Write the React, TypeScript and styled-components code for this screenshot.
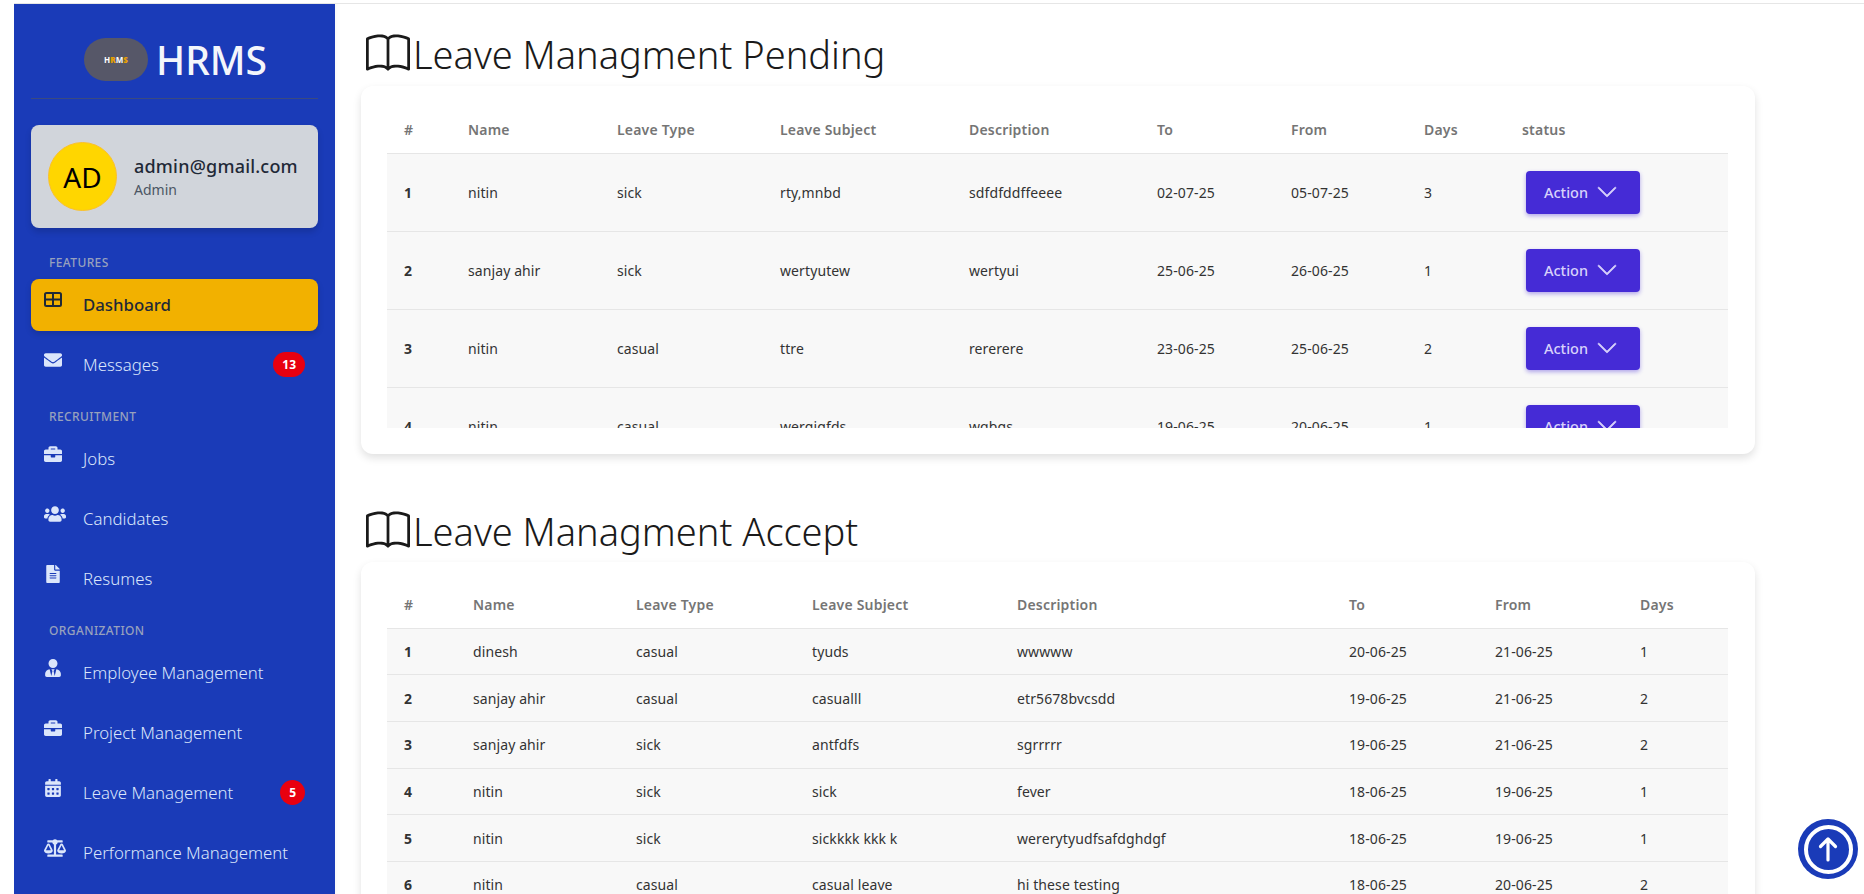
import styled, { createGlobalStyle } from "styled-components";
import { BsBook, BsChevronDown } from "react-icons/bs";
import {
  FaBalanceScale,
  FaBriefcase,
  FaCalendarAlt,
  FaEnvelope,
  FaFileAlt,
  FaUsers,
  FaUserTie,
} from "react-icons/fa";
import type { ReactNode } from "react";

const pendingWidths = [64, 149, 163, 189, 188, 134, 133, 98, 223];
const acceptWidths = [69, 163, 176, 205, 332, 146, 145, 105];

const pendingRows = [
  ["1", "nitin", "sick", "rty,mnbd", "sdfdfddffeeee", "02-07-25", "05-07-25", "3"],
  ["2", "sanjay ahir", "sick", "wertyutew", "wertyui", "25-06-25", "26-06-25", "1"],
  ["3", "nitin", "casual", "ttre", "rererere", "23-06-25", "25-06-25", "2"],
  ["4", "nitin", "casual", "wergjgfds", "wqbgs", "19-06-25", "20-06-25", "1"],
];

const acceptRows = [
  ["1", "dinesh", "casual", "tyuds", "wwwww", "20-06-25", "21-06-25", "1"],
  ["2", "sanjay ahir", "casual", "casualll", "etr5678bvcsdd", "19-06-25", "21-06-25", "2"],
  ["3", "sanjay ahir", "sick", "antfdfs", "sgrrrrr", "19-06-25", "21-06-25", "2"],
  ["4", "nitin", "sick", "sick", "fever", "18-06-25", "19-06-25", "1"],
  ["5", "nitin", "sick", "sickkkk kkk k", "wererytyudfsafdghdgf", "18-06-25", "19-06-25", "1"],
  ["6", "nitin", "casual", "casual leave", "hi these testing", "18-06-25", "20-06-25", "2"],
];

const baseHeads = ["#", "Name", "Leave Type", "Leave Subject", "Description", "To", "From", "Days"];

function DashIcon() {
  return (
    <svg viewBox="0 0 18 18" fill="none" stroke="currentColor" strokeWidth="2">
      <rect x="1" y="2" width="16" height="13" rx="1.5" />
      <path d="M1 8.5h16M9 2v13" />
    </svg>
  );
}

function UpArrow() {
  return (
    <svg width="20" height="26" viewBox="0 0 20 26" fill="none" stroke="currentColor" strokeWidth="3.2" strokeLinecap="round" strokeLinejoin="round">
      <path d="M10 24V3M2.5 10.5 10 3l7.5 7.5" />
    </svg>
  );
}

type NavProps = {
  icon: ReactNode;
  label: string;
  active?: boolean;
  wide?: boolean;
  badge?: string;
};

function NavRow({ icon, label, active, wide, badge }: NavProps) {
  return (
    <NavItem $active={active}>
      <NavIcon $wide={wide}>{icon}</NavIcon>
      <NavLabel>{label}</NavLabel>
      {badge && <Badge>{badge}</Badge>}
    </NavItem>
  );
}

export default function App() {
  return (
    <>
      <GlobalStyle />
      <TopLine />
      <Shell>
        <Sidebar>
          <Brand>
            <LogoPill>
              <LogoText>
                H<b>R</b>M<b>S</b>
              </LogoText>
            </LogoPill>
            <BrandName>HRMS</BrandName>
          </Brand>
          <BrandRule />
          <UserCard>
            <Avatar>AD</Avatar>
            <div>
              <UserMail>admin@gmail.com</UserMail>
              <UserRole>Admin</UserRole>
            </div>
          </UserCard>
          <Nav>
            <NavHeading $first>FEATURES</NavHeading>
            <NavRow icon={<DashIcon />} label="Dashboard" active />
            <NavRow icon={<FaEnvelope />} label="Messages" badge="13" />
            <NavHeading>RECRUITMENT</NavHeading>
            <NavRow icon={<FaBriefcase />} label="Jobs" />
            <NavRow icon={<FaUsers />} label="Candidates" wide />
            <NavRow icon={<FaFileAlt />} label="Resumes" />
            <NavHeading>ORGANIZATION</NavHeading>
            <NavRow icon={<FaUserTie />} label="Employee Management" />
            <NavRow icon={<FaBriefcase />} label="Project Management" />
            <NavRow icon={<FaCalendarAlt />} label="Leave Management" badge="5" />
            <NavRow icon={<FaBalanceScale />} label="Performance Management" wide />
          </Nav>
        </Sidebar>
        <Main>
          <Title>
            <BsBook />
            Leave Managment Pending
          </Title>
          <Card>
            <ScrollBox>
              <Table>
                <colgroup>
                  {pendingWidths.map((w, i) => (
                    <Col key={i} $w={w} />
                  ))}
                </colgroup>
                <thead>
                  <tr>
                    {[...baseHeads, "status"].map((h) => (
                      <HeadCell key={h} $h={47}>
                        {h}
                      </HeadCell>
                    ))}
                  </tr>
                </thead>
                <tbody>
                  {pendingRows.map((row) => (
                    <tr key={row[0]}>
                      {row.map((c, i) => (
                        <BodyCell key={i} $h={78} $bold={i === 0}>
                          {c}
                        </BodyCell>
                      ))}
                      <BodyCell $h={78}>
                        <ActionButton>
                          Action <BsChevronDown />
                        </ActionButton>
                      </BodyCell>
                    </tr>
                  ))}
                </tbody>
              </Table>
            </ScrollBox>
          </Card>
          <Title $second>
            <BsBook />
            Leave Managment Accept
          </Title>
          <Card>
            <Table>
              <colgroup>
                {acceptWidths.map((w, i) => (
                  <Col key={i} $w={w} />
                ))}
              </colgroup>
              <thead>
                <tr>
                  {baseHeads.map((h) => (
                    <HeadCell key={h} $h={46}>
                      {h}
                    </HeadCell>
                  ))}
                </tr>
              </thead>
              <tbody>
                {acceptRows.map((row) => (
                  <tr key={row[0]}>
                    {row.map((c, i) => (
                      <BodyCell key={i} $h={46.7} $bold={i === 0}>
                        {c}
                      </BodyCell>
                    ))}
                  </tr>
                ))}
              </tbody>
            </Table>
          </Card>
        </Main>
      </Shell>
      <ScrollTop>
        <ScrollRing>
          <UpArrow />
        </ScrollRing>
      </ScrollTop>
    </>
  );
}

const GlobalStyle = createGlobalStyle`
  html, body {
    margin: 0;
    height: 100%;
    overflow: hidden;
    background: #fff;
    font-family: "Noto Sans", "Open Sans", sans-serif;
  }
  * {
    box-sizing: border-box;
  }
`;

const TopLine = styled.div`
  height: 4px;
  margin-left: 14px;
  border-top: 3px solid #fff;
  border-bottom: 1px solid #e6e6e6;
`;

const Shell = styled.div`
  display: flex;
  height: 890px;
  padding-left: 14px;
  overflow: hidden;
`;

const Sidebar = styled.aside`
  width: 321px;
  flex-shrink: 0;
  padding: 0 17px;
  background: #1a3bb8;
  overflow: hidden;
`;

const Brand = styled.div`
  display: flex;
  align-items: center;
  justify-content: center;
  gap: 8px;
  height: 94px;
  padding: 17px 0 0 2px;
`;

const LogoPill = styled.div`
  display: flex;
  align-items: center;
  justify-content: center;
  width: 64px;
  height: 43px;
  border-radius: 22px;
  background: #565768;
`;

const LogoText = styled.span`
  font-size: 8px;
  font-weight: 700;
  color: #fff;

  b {
    color: #e8a200;
  }
`;

const BrandName = styled.div`
  font-size: 39px;
  font-weight: 500;
  line-height: 43px;
  color: #f4f6fb;
`;

const BrandRule = styled.div`
  height: 1px;
  background: #3b4a80;
`;

const UserCard = styled.div`
  display: flex;
  align-items: center;
  gap: 17px;
  height: 103px;
  margin-top: 26px;
  padding: 0 17px;
  border-radius: 8px;
  background: #d1d5db;
  box-shadow: 0 4px 6px rgba(0, 0, 0, 0.15);
`;

const Avatar = styled.div`
  display: flex;
  align-items: center;
  justify-content: center;
  width: 69px;
  height: 69px;
  flex-shrink: 0;
  border: 1px solid #fbc02d;
  border-radius: 50%;
  background: #ffd600;
  font-size: 28px;
  color: #000;
`;

const UserMail = styled.div`
  font-size: 18px;
  font-weight: 500;
  letter-spacing: 0.2px;
  line-height: 24px;
  color: #1f2937;
`;

const UserRole = styled.div`
  margin-top: 2px;
  font-size: 14px;
  line-height: 20px;
  color: #4b5563;
`;

const Nav = styled.nav`
  display: flex;
  flex-direction: column;
  gap: 8px;
`;

const NavHeading = styled.div<{ $first?: boolean }>`
  height: 16px;
  margin-top: ${(p) => (p.$first ? "27px" : "10px")};
  padding-left: 18px;
  font-size: 12px;
  font-weight: 500;
  letter-spacing: 0.4px;
  line-height: 16px;
  color: #97a1bd;
`;

const NavItem = styled.div<{ $active?: boolean }>`
  display: flex;
  align-items: center;
  height: 52px;
  flex-shrink: 0;
  padding: 0 13px;
  border-radius: 8px;
  background: ${(p) => (p.$active ? "#f2b100" : "transparent")};
  box-shadow: ${(p) => (p.$active ? "0 3px 6px rgba(0, 0, 0, 0.15)" : "none")};
  color: ${(p) => (p.$active ? "#1f2937" : "#dbe6fb")};
  font-weight: ${(p) => (p.$active ? 500 : 300)};
`;

const NavIcon = styled.span<{ $wide?: boolean }>`
  display: flex;
  width: 39px;
  flex-shrink: 0;
  margin-top: -10px;

  svg {
    width: ${(p) => (p.$wide ? "22px" : "18px")};
    height: ${(p) => (p.$wide ? "22px" : "18px")};
  }
`;

const NavLabel = styled.span`
  flex: 1;
  margin-top: -1px;
  font-size: 16.8px;
  white-space: nowrap;
`;

const Badge = styled.span`
  min-width: 24px;
  height: 25px;
  margin-top: -1px;
  padding: 0 9px;
  border-radius: 13px;
  background: #e8000f;
  font-size: 12px;
  font-weight: 700;
  line-height: 25px;
  text-align: center;
  color: #fff;
`;

const Main = styled.main`
  flex: 1;
  min-width: 0;
  padding: 0 0 0 26px;
  box-shadow: inset 6px 0 6px -6px rgba(0, 0, 0, 0.05);
`;

const Title = styled.h2<{ $second?: boolean }>`
  display: flex;
  align-items: center;
  gap: 3px;
  height: 44px;
  margin: ${(p) => (p.$second ? "55px 0 9px 5px" : "28px 0 10px 5px")};
  font-size: 38px;
  font-weight: 300;
  white-space: nowrap;
  color: #1a1a1a;

  svg {
    width: 44px;
    height: 44px;
  }
`;

const Card = styled.section`
  width: 1394px;
  padding: 20px 26px 26px;
  border-radius: 12px;
  background: #fff;
  box-shadow: 0 4px 8px rgba(0, 0, 0, 0.12);
`;

const ScrollBox = styled.div`
  height: 322px;
  overflow: hidden;
`;

const Table = styled.table`
  width: 1341px;
  table-layout: fixed;
  border-collapse: collapse;
`;

const Col = styled.col<{ $w: number }>`
  width: ${(p) => p.$w}px;
`;

const HeadCell = styled.th<{ $h: number }>`
  height: ${(p) => p.$h}px;
  padding: 0 0 0 17px;
  border-bottom: 1px solid #e6e6e6;
  font-size: 14px;
  font-weight: 600;
  letter-spacing: 0.2px;
  text-align: left;
  color: #757575;
`;

const BodyCell = styled.td<{ $h: number; $bold?: boolean }>`
  height: ${(p) => p.$h}px;
  padding: 0 0 0 17px;
  border-bottom: 1px solid #e6e6e6;
  background: #f8f8f8;
  font-size: 14px;
  font-weight: ${(p) => (p.$bold ? 700 : 400)};
  letter-spacing: 0.1px;
  color: #333;
`;

const ActionButton = styled.button`
  display: flex;
  align-items: center;
  gap: 8px;
  width: 114px;
  height: 43px;
  margin-left: 4px;
  padding: 0 0 0 18px;
  border: none;
  border-radius: 4px;
  background: #452bd6;
  box-shadow: 0 2px 4px rgba(69, 43, 214, 0.4);
  font-family: inherit;
  font-size: 14.5px;
  font-weight: 500;
  color: #d8d2fb;

  svg {
    width: 22px;
    height: 22px;
    stroke: currentColor;
    stroke-width: 0.6px;
  }
`;

const ScrollTop = styled.div`
  position: fixed;
  right: 6px;
  bottom: 15px;
  display: flex;
  align-items: center;
  justify-content: center;
  width: 60px;
  height: 60px;
  border-radius: 50%;
  background: #1a3bb8;
`;

const ScrollRing = styled.div`
  display: flex;
  align-items: center;
  justify-content: center;
  width: 49px;
  height: 49px;
  border: 4px solid #fff;
  border-radius: 50%;
  color: #fff;
`;
